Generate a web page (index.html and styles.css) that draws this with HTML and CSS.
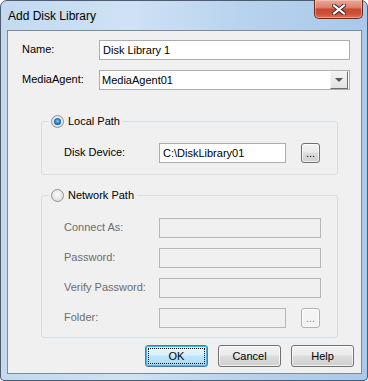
FILE: index.html
```html
<!DOCTYPE html>
<html lang="en">
<head>
    <meta charset="UTF-8">
    <title>Add Disk Library</title>
    <link rel="stylesheet" href="styles.css">
</head>
<body>
    <div class="window">
        <div class="titlebar">
            <span class="title">Add Disk Library</span>
            <div class="close-btn">
                <svg width="14" height="11" viewBox="0 0 14 11">
                    <path d="M2 1.5 L12 9.5 M12 1.5 L2 9.5" stroke="#3a2220" stroke-width="4" stroke-linecap="square"/>
                    <path d="M2 1.5 L12 9.5 M12 1.5 L2 9.5" stroke="#fff" stroke-width="2.2" stroke-linecap="square"/>
                </svg>
            </div>
        </div>

        <div class="client">
            <div class="form-grid">
                <label>Name:</label>
                <div class="textbox">Disk Library 1</div>
                <label>MediaAgent:</label>
                <div class="textbox combo">
                    <span>MediaAgent01</span>
                    <span class="combo-btn"><span class="arrow"></span></span>
                </div>
            </div>

            <fieldset class="group group-local">
                <legend><span class="radio checked"></span>Local Path</legend>
                <div class="group-grid">
                    <label>Disk Device:</label>
                    <div class="textbox">C:\DiskLibrary01</div>
                    <div class="browse">...</div>
                </div>
            </fieldset>

            <fieldset class="group group-network">
                <legend><span class="radio"></span>Network Path</legend>
                <div class="group-grid disabled">
                    <label>Connect As:</label>
                    <div class="textbox wide"></div>
                    <label>Password:</label>
                    <div class="textbox wide"></div>
                    <label>Verify Password:</label>
                    <div class="textbox wide"></div>
                    <label>Folder:</label>
                    <div class="textbox"></div>
                    <div class="browse">...</div>
                </div>
            </fieldset>

            <div class="buttons">
                <div class="btn btn-default"><span>OK</span></div>
                <div class="btn">Cancel</div>
                <div class="btn">Help</div>
            </div>
        </div>
    </div>
</body>
</html>
```

FILE: styles.css
```css
* {
    box-sizing: border-box;
}

body {
    margin: 0;
    font-family: "Liberation Sans", Arial, sans-serif;
    font-size: 11px;
    color: #000;
    background: #fff;
}

.window {
    width: 368px;
    height: 381px;
    border: 1px solid #4d5d6f;
    border-radius: 7px 7px 4px 4px;
    background: linear-gradient(to right, #c2d9f0 0%, #cfe2f5 35%, #b9d3ee 65%, #a9c8ea 100%);
    display: flex;
    flex-direction: column;
}

.titlebar {
    height: 29px;
    display: flex;
    justify-content: space-between;
    align-items: flex-start;
}

.title {
    font-size: 12px;
    padding: 8px 0 0 7px;
}

.close-btn {
    width: 49px;
    height: 19px;
    margin: -1px 4px 0 0;
    border: 1px solid #6b2a20;
    border-top: none;
    border-radius: 0 0 5px 5px;
    background: linear-gradient(#e8a899 0%, #dc8470 40%, #c64a34 52%, #cb4e37 75%, #e07158 100%);
    box-shadow: inset 0 0 0 1px rgba(255, 220, 210, 0.45);
    display: flex;
    justify-content: center;
    align-items: center;
}

.client {
    flex: 1;
    margin: 0 5px 6px 6px;
    border: 1px solid #7b8b9c;
    background: #f0f0f0;
    padding: 9px 7px 6px 14px;
    display: flex;
    flex-direction: column;
}

label {
    padding-bottom: 2px;
    white-space: nowrap;
}

.form-grid {
    display: grid;
    grid-template-columns: 77px 251px;
    grid-auto-rows: 20px;
    row-gap: 10px;
    align-items: center;
}

.textbox {
    height: 20px;
    border: 1px solid #abadb3;
    background: #fff;
    padding-left: 3px;
    display: flex;
    align-items: center;
    white-space: nowrap;
}

.combo {
    justify-content: space-between;
    padding-left: 2px;
    padding-right: 1px;
}

.combo-btn {
    width: 18px;
    height: 18px;
    border: 1px solid;
    border-color: #f6f6f6 #6e6e6e #6e6e6e #f6f6f6;
    background: linear-gradient(#f2f2f2, #e2e2e2);
    display: flex;
    justify-content: center;
    align-items: center;
}

.arrow {
    width: 0;
    height: 0;
    border-left: 4px solid transparent;
    border-right: 4px solid transparent;
    border-top: 4px solid #555;
}

.group {
    width: 297px;
    margin: 24px 0 0 19px;
    padding: 0 0 11px 0;
    border: 1px solid #d5dfe5;
    border-radius: 3px;
    min-width: 0;
}

.group-network {
    margin-top: 13px;
    padding-bottom: 9px;
}

.group legend {
    margin-left: 7px;
    padding: 0 3px 0 2px;
    height: 14px;
    display: flex;
    align-items: center;
    gap: 4px;
}

.radio {
    width: 13px;
    height: 13px;
    border: 1px solid #8d9196;
    border-radius: 50%;
    background: radial-gradient(circle at 50% 40%, #fafafa 0%, #e6e6e6 60%, #d4d4d4 100%);
    display: flex;
    justify-content: center;
    align-items: center;
}

.radio.checked::after {
    content: "";
    width: 7px;
    height: 7px;
    border-radius: 50%;
    background: radial-gradient(circle at 50% 45%, #9ad6fb 0%, #2f8fe0 35%, #104e94 75%, #0b3360 100%);
}

.group-grid {
    display: grid;
    grid-template-columns: 80px 127px 19px;
    grid-auto-rows: 20px;
    column-gap: 15px;
    row-gap: 10px;
    align-items: center;
    padding: 15px 0 0 22px;
}

.group-network .group-grid {
    padding-top: 16px;
}

.textbox.wide {
    grid-column: span 2;
    width: 162px;
}

.browse {
    width: 19px;
    height: 20px;
    border: 1px solid #707070;
    border-radius: 3px;
    background: linear-gradient(#f2f2f2 0%, #ebebeb 45%, #dddddd 50%, #cfcfcf 100%);
    box-shadow: inset 0 0 0 1px rgba(255, 255, 255, 0.7);
    display: flex;
    justify-content: center;
    align-items: flex-end;
    padding-bottom: 3px;
    line-height: 11px;
}

.disabled label {
    color: #6d6d6d;
}

.disabled .textbox {
    border-color: #b5b5b5;
    background: #f0f0f0;
}

.disabled .browse {
    border-color: #adb2b5;
    background: #f4f4f4;
    color: #8a8a8a;
}

.buttons {
    display: flex;
    justify-content: flex-end;
    gap: 10px;
    margin-top: 7px;
}

.btn {
    width: 63px;
    height: 22px;
    border: 1px solid #707070;
    border-radius: 3px;
    background: linear-gradient(#f2f2f2 0%, #ebebeb 45%, #dddddd 50%, #cfcfcf 100%);
    box-shadow: inset 0 0 0 1px rgba(255, 255, 255, 0.7);
    display: flex;
    justify-content: center;
    align-items: center;
}

.btn-default {
    border-color: #3c7fb1;
    background: linear-gradient(#eaf6fd 0%, #d9f0fc 45%, #bee6fd 50%, #a7d9f5 100%);
    box-shadow: inset 0 0 0 1px #48b4ef;
    padding: 2px;
}

.btn-default span {
    width: 100%;
    height: 100%;
    border: 1px dotted #000;
    display: flex;
    justify-content: center;
    align-items: center;
}
```
